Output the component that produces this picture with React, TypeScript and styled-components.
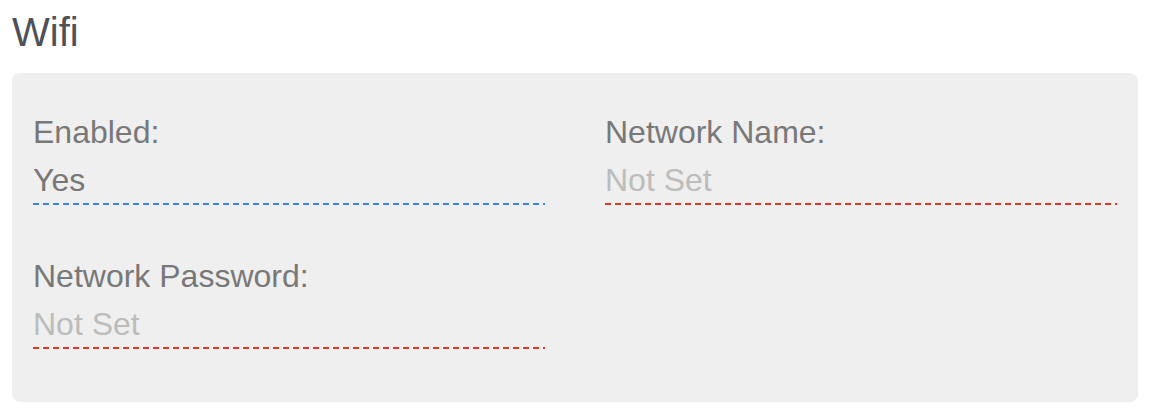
import React from 'react';
import styled, { createGlobalStyle } from 'styled-components';

const GlobalStyle = createGlobalStyle`
  html, body {
    margin: 0;
    padding: 0;
    background: #ffffff;
  }

  body {
    font-family: "Liberation Sans", Arial, Helvetica, sans-serif;
  }
`;

const colors = {
  title: '#4e5156',
  label: '#787878',
  value: '#777777',
  empty: '#bcbcbc',
  panel: '#efefef',
  valid: '#3a84f2',
  invalid: '#e8362b',
};

const Page = styled.div`
  padding: 9px 14px 0 12px;
`;

const SectionTitle = styled.h2`
  margin: 0 0 18px;
  font-size: 40px;
  font-weight: 400;
  line-height: 46px;
  color: ${colors.title};
`;

const Panel = styled.div`
  display: grid;
  grid-template-columns: 1fr 1fr;
  column-gap: 60px;
  row-gap: 53px;
  padding: 41px 21px 53px 21px;
  background: ${colors.panel};
  border-radius: 8px;
`;

const Field = styled.div`
  display: flex;
  flex-direction: column;
  gap: 11px;
`;

const Label = styled.div`
  font-size: 32px;
  line-height: 37px;
  color: ${colors.label};
`;

// dashed underline: blue when the setting has a value, red when it is missing
const Value = styled.div<{ $set: boolean }>`
  padding-bottom: 6px;
  font-size: 32px;
  line-height: 37px;
  color: ${({ $set }) => ($set ? colors.value : colors.empty)};
  background-image: repeating-linear-gradient(
    to right,
    ${({ $set }) => ($set ? colors.valid : colors.invalid)} 0 6px,
    transparent 6px 10px
  );
  background-size: 100% 2px;
  background-position: left bottom;
  background-repeat: no-repeat;
`;

type Setting = {
  label: string;
  value?: string;
};

const wifiSettings: Setting[] = [
  { label: 'Enabled:', value: 'Yes' },
  { label: 'Network Name:' },
  { label: 'Network Password:' },
];

export default function App() {
  return (
    <>
      <GlobalStyle />
      <Page>
        <SectionTitle>Wifi</SectionTitle>
        <Panel>
          {wifiSettings.map((setting) => (
            <Field key={setting.label}>
              <Label>{setting.label}</Label>
              <Value $set={Boolean(setting.value)}>{setting.value ?? 'Not Set'}</Value>
            </Field>
          ))}
        </Panel>
      </Page>
    </>
  );
}
